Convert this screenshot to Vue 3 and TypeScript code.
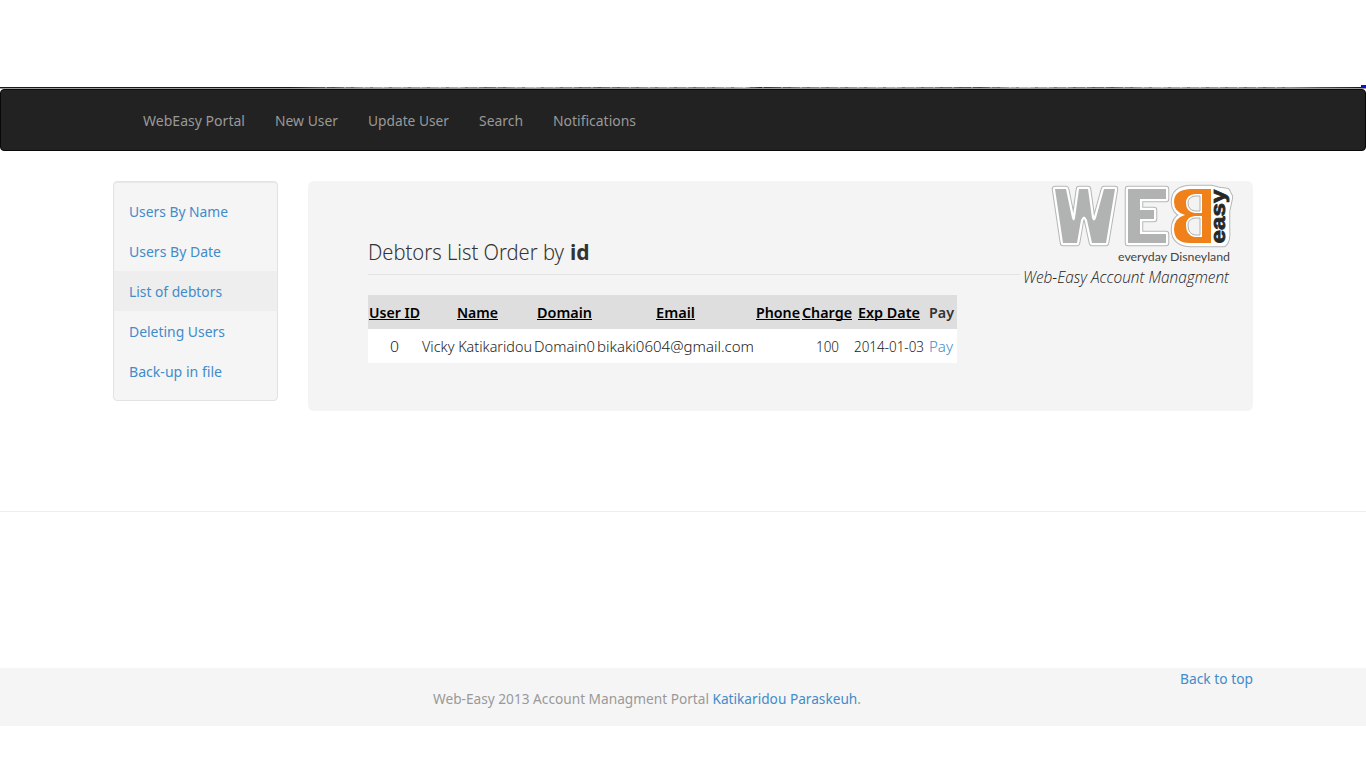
<script setup lang="ts">
interface NavLink { label: string; width: number }
interface Column { label: string; value: string; width: number; headWidth: number; valueWidth: number }

const nav: NavLink[] = [
  { label: 'WebEasy Portal', width: 102 },
  { label: 'New User', width: 63 },
  { label: 'Update User', width: 81 },
  { label: 'Search', width: 44 },
  { label: 'Notifications', width: 83 },
]
const side: NavLink[] = [
  { label: 'Users By Name', width: 99 },
  { label: 'Users By Date', width: 92 },
  { label: 'List of debtors', width: 93 },
  { label: 'Deleting Users', width: 96 },
  { label: 'Back-up in file', width: 93 },
]
const columns: Column[] = [
  { label: 'User ID', value: '0', width: 53, headWidth: 51, valueWidth: 9 },
  { label: 'Name', value: 'Vicky Katikaridou', width: 112, headWidth: 41, valueWidth: 110 },
  { label: 'Domain', value: 'Domain0', width: 63, headWidth: 55, valueWidth: 61 },
  { label: 'Email', value: 'bikaki0604@gmail.com', width: 159, headWidth: 39, valueWidth: 157 },
  { label: 'Phone', value: '', width: 46, headWidth: 44, valueWidth: 0 },
  { label: 'Charge', value: '100', width: 52, headWidth: 50, valueWidth: 23 },
  { label: 'Exp Date', value: '2014-01-03', width: 72, headWidth: 62, valueWidth: 70 },
  { label: 'Pay', value: 'Pay', width: 32, headWidth: 25, valueWidth: 24 },
]
const letterW = 'M5 8H16L22 37Q24 42 25 37L29 8H38L42 37Q44 42 46 37L54 8H65L56 62H42L37 39Q34 32 31 39L27 62H13Z'
const letterE = 'M78 8H116V18H90V29H104V38H90V53H116V62H78Z'
const badge = 'M161 7H140Q124 8 124 21Q124 30 133 34Q124 38 124 48Q124 62 140 63H163H174Q178 60 177 48V30L180 16L177 10L169 9Z'
const counterTop = 'M150 15H145Q138 16 138 22Q138 29 145 30H150Z'
const counterBottom = 'M150 37H145Q138 38 138 44Q138 53 145 54H150Z'
</script>

<template>
  <div class="page">
    <div class="banner"><i class="corner"></i></div>
    <nav class="navbar">
      <a v-for="l in nav" :key="l.label">
        <svg :width="l.width" height="20"><text y="15" :textLength="l.width" lengthAdjust="spacingAndGlyphs">{{ l.label }}</text></svg>
      </a>
    </nav>
    <div class="main">
      <aside class="sidebar">
        <a v-for="(l, i) in side" :key="l.label" :class="{ active: i === 2 }">
          <svg :width="l.width" height="20"><text y="16" :textLength="l.width" lengthAdjust="spacingAndGlyphs">{{ l.label }}</text></svg>
        </a>
      </aside>
      <section class="panel">
        <div class="brand">
          <svg class="logo" width="184" height="84" viewBox="0 0 184 84">
            <g stroke-linejoin="round">
              <g fill="#b5b7b7" stroke="#b5b7b7" stroke-width="6.5">
                <path :d="letterW" />
                <path :d="letterE" />
                <path :d="badge" />
              </g>
              <g fill="#b0b3b2" stroke="#fff" stroke-width="4.5">
                <path :d="letterW" />
                <path :d="letterE" />
                <path fill="#fff" :d="badge" />
              </g>
              <g fill="#b0b3b2">
                <path :d="letterW" />
                <path :d="letterE" />
              </g>
            </g>
            <path fill="#f08019" d="M161 8H140Q124 9 124 21Q124 31 135 34Q124 37 124 48Q124 62 140 62H161Z" />
            <g fill="#f3f3f3" stroke="#fff" stroke-width="4">
              <path :d="counterTop" />
              <path :d="counterBottom" />
            </g>
            <g fill="#f3f3f3" stroke="#afb0b0" stroke-width="1">
              <path :d="counterTop" />
              <path :d="counterBottom" />
            </g>
            <text class="easy" transform="translate(175 62.5) rotate(-90)" textLength="54" lengthAdjust="spacingAndGlyphs">easy</text>
            <text class="slogan" x="68" y="80" textLength="112" lengthAdjust="spacingAndGlyphs">everyday Disneyland</text>
          </svg>
          <svg class="tagline" width="210" height="24"><text x="0" y="18" textLength="206" lengthAdjust="spacingAndGlyphs">Web-Easy Account Managment</text></svg>
        </div>
        <h2>
          <svg width="196" height="30"><text y="22" textLength="196" lengthAdjust="spacingAndGlyphs">Debtors List Order by</text></svg>
          <svg class="bold" width="19" height="30"><text y="22">id</text></svg>
        </h2>
        <div class="rule"></div>
        <table>
          <colgroup><col v-for="c in columns" :key="c.label" :style="{ width: c.width + 'px' }" /></colgroup>
          <thead>
            <tr>
              <th v-for="c in columns" :key="c.label" :class="{ plain: c.label === 'Pay' }">
                <svg :width="c.headWidth" height="20"><text y="16" :textLength="c.headWidth" lengthAdjust="spacingAndGlyphs">{{ c.label }}</text><rect v-if="c.label !== 'Pay'" y="17" :width="c.headWidth" height="1" /></svg>
              </th>
            </tr>
          </thead>
          <tbody>
            <tr>
              <td v-for="c in columns" :key="c.label" :class="{ pay: c.label === 'Pay' }">
                <svg v-if="c.value" :width="c.valueWidth" height="20"><text y="16" :textLength="c.valueWidth" lengthAdjust="spacingAndGlyphs">{{ c.value }}</text></svg>
              </td>
            </tr>
          </tbody>
        </table>
      </section>
    </div>
    <hr />
    <footer>
      <a class="top"><svg width="73" height="20"><text y="15" textLength="73" lengthAdjust="spacingAndGlyphs">Back to top</text></svg></a>
      <svg class="credit" width="428" height="20">
        <text y="15" textLength="428" lengthAdjust="spacingAndGlyphs">Web-Easy 2013 Account Managment Portal <tspan class="link">Katikaridou Paraskeuh</tspan>.</text>
      </svg>
    </footer>
  </div>
</template>

<style>
body { margin: 0; background: #fff; overflow: hidden; }
</style>
<style scoped>
.page { width: 1366px; height: 768px; padding-top: 87px; box-sizing: border-box; background: #fff; font: 400 14.2px 'Noto Sans', 'Open Sans', sans-serif; }
svg { display: block; overflow: visible; fill: currentColor; }
.banner { height: 2px; position: relative; background: linear-gradient(#999, #999) 0 1px / 100% 1px no-repeat, repeating-linear-gradient(90deg, transparent 0 5px, rgba(255,255,255,.35) 5px 7px, transparent 7px 12px, rgba(0,40,200,.35) 12px 15px, transparent 15px 19px) 320px 0 / 970px 1px no-repeat, linear-gradient(90deg, #0000c8 0 290px, #8020d0 320px, #2850a0 330px, #70c0d0 370px, #60b0d0 420px, #e080d0 435px, #70c0d8 460px, #3070e0 490px, #80d0e0 530px, #3070d0 600px, #b080ff 660px, #5090e0 700px, #a0c0e0 745px, #202060 760px, #8070d0 800px, #60a0e0 850px, #b0a0f0 890px, #2040e0 980px, #90d0e0 1020px, #3060e0 1110px, #e090d0 1155px, #60b0d0 1200px, #4090d0 1270px, #d060d0 1290px, #5030e0 1320px, #0000d0 1360px); }
.corner { position: absolute; right: 0; top: -2px; width: 5px; height: 3px; background: #1010d0; }
.navbar { height: 62px; box-sizing: border-box; border: 1px solid #080808; border-radius: 4px; background: #222; padding: 21px 0 0 142px; display: flex; gap: 30px; color: #999; }
.main { width: 1140px; margin: 30px auto 0; display: flex; gap: 30px; align-items: flex-start; }
.sidebar { width: 165px; height: 220px; box-sizing: border-box; border: 1px solid #e3e3e3; border-radius: 4px; background: #f5f5f5; box-shadow: inset 0 1px 1px rgba(0,0,0,.05); padding-top: 9px; color: #428bca; }
.sidebar a { display: block; padding: 10px 15px; }
.sidebar a.active { background: #eee; }
.panel { width: 945px; height: 230px; box-sizing: border-box; border-radius: 6px; background: #f4f4f4; padding: 57px 60px 0; position: relative; color: #333; font-weight: 300; }
h2 { margin: 0; height: 36px; font-size: 22px; font-weight: 300; display: flex; gap: 6px; }
.bold { font-size: 21px; font-weight: 700; }
.rule { width: 652px; height: 1px; background: #e3e3e3; margin-bottom: 20px; }
.brand { position: absolute; right: 20px; top: 0; width: 210px; }
.logo { margin-left: 27px; }
.easy { font: 900 21px 'Liberation Sans', sans-serif; fill: #272727; stroke: #272727; stroke-width: .8; }
.slogan { font: 11.5px Lato, sans-serif; fill: #444; }
.tagline { font: italic 300 15.5px 'Open Sans', sans-serif; color: #222; }
table { width: 589px; table-layout: fixed; border-collapse: collapse; }
th, td { height: 34px; padding: 0; }
th svg, td svg { margin: auto; }
thead { background: #dedede; color: #000; }
th { font-weight: 600; }
th.plain { color: #333; }
tbody { background: #fff; color: #222; }
.pay, .link, .top { color: #428bca; fill: #428bca; }
hr { height: 1px; border: 0; margin: 100px 0 156px; background: #eee; }
footer { height: 58px; background: #f5f5f5; position: relative; color: #999; padding-top: 21px; box-sizing: border-box; }
.credit { margin-left: 433px; }
.top { position: absolute; right: 113px; top: 1px; }
</style>
